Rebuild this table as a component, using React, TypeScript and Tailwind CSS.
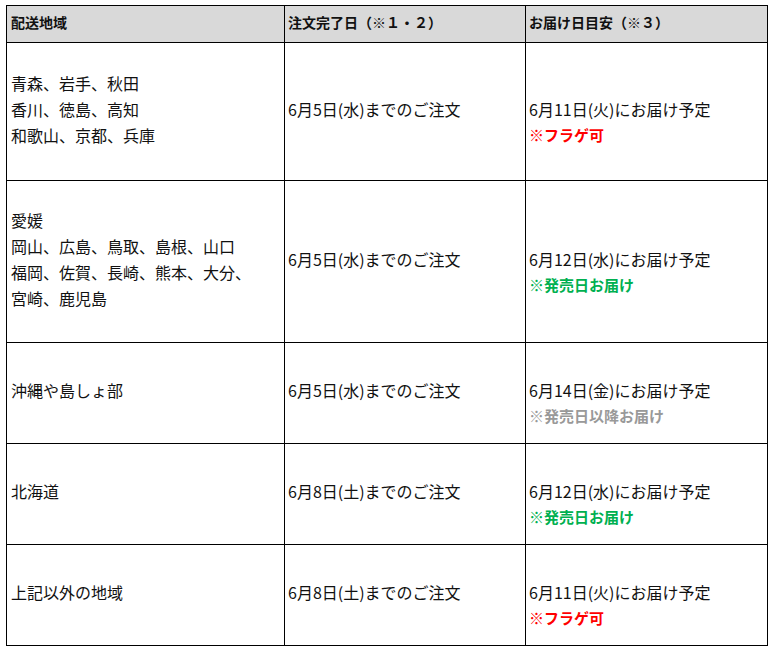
const font = { fontFamily: '"Noto Sans CJK JP", "Noto Sans", sans-serif' };

type Note = { text: string; tone: 'red' | 'green' | 'gray' };

interface Row {
  areas: string[];
  order: string;
  delivery: string;
  note: Note;
  height: string;
}

const rows: Row[] = [
  {
    areas: ['青森、岩手、秋田', '香川、徳島、高知', '和歌山、京都、兵庫'],
    order: '6月5日(水)までのご注文',
    delivery: '6月11日(火)にお届け予定',
    note: { text: '※フラゲ可', tone: 'red' },
    height: 'h-[138px]',
  },
  {
    areas: ['愛媛', '岡山、広島、鳥取、島根、山口', '福岡、佐賀、長崎、熊本、大分、', '宮崎、鹿児島'],
    order: '6月5日(水)までのご注文',
    delivery: '6月12日(水)にお届け予定',
    note: { text: '※発売日お届け', tone: 'green' },
    height: 'h-[162px]',
  },
  {
    areas: ['沖縄や島しょ部'],
    order: '6月5日(水)までのご注文',
    delivery: '6月14日(金)にお届け予定',
    note: { text: '※発売日以降お届け', tone: 'gray' },
    height: 'h-[101px]',
  },
  {
    areas: ['北海道'],
    order: '6月8日(土)までのご注文',
    delivery: '6月12日(水)にお届け予定',
    note: { text: '※発売日お届け', tone: 'green' },
    height: 'h-[101px]',
  },
  {
    areas: ['上記以外の地域'],
    order: '6月8日(土)までのご注文',
    delivery: '6月11日(火)にお届け予定',
    note: { text: '※フラゲ可', tone: 'red' },
    height: 'h-[101px]',
  },
];

const toneColor = {
  red: 'text-[#ff0000]',
  green: 'text-[#00b050]',
  gray: 'text-[#999999]',
};

export default function App() {
  return (
    <div className="w-[772px] h-[651px] bg-white pt-[5px] pl-[6px]" style={font}>
      <table className="border-collapse w-[761px] table-fixed text-[#111]">
        <colgroup>
          <col className="w-[278px]" />
          <col className="w-[241px]" />
          <col className="w-[242px]" />
        </colgroup>
        <thead>
          <tr className="h-[37px] bg-[#d9d9d9]">
            <th className="border border-black text-left font-bold text-[14px] leading-[20px] pl-[4px] pb-[4px] align-middle">
              配送地域
            </th>
            <th className="border border-black text-left font-bold text-[14px] leading-[20px] pl-[3px] pb-[4px] align-middle">
              注文完了日（※１・２）
            </th>
            <th className="border border-black text-left font-bold text-[14px] leading-[20px] pl-[3px] pb-[4px] align-middle">
              お届け日目安（※３）
            </th>
          </tr>
        </thead>
        <tbody>
          {rows.map((r, i) => (
            <tr key={i} className={r.height}>
              <td className="border border-black align-middle pl-[4px] pb-[6px] text-[16px] leading-[26px]">
                {r.areas.map((a, j) => (
                  <div key={j} className="whitespace-nowrap">{a}</div>
                ))}
              </td>
              <td className="border border-black align-middle pl-[3px] pb-[6px] text-[16px] leading-[26px] whitespace-nowrap">
                {r.order}
              </td>
              <td className="border border-black align-middle pl-[3px] pb-[6px] text-[16px] leading-[26px]">
                <div className="h-[26px]" />
                <div className="whitespace-nowrap">{r.delivery}</div>
                <div className={`font-bold text-[15px] whitespace-nowrap ${toneColor[r.note.tone]}`}>
                  {r.note.text}
                </div>
              </td>
            </tr>
          ))}
        </tbody>
      </table>
    </div>
  );
}
